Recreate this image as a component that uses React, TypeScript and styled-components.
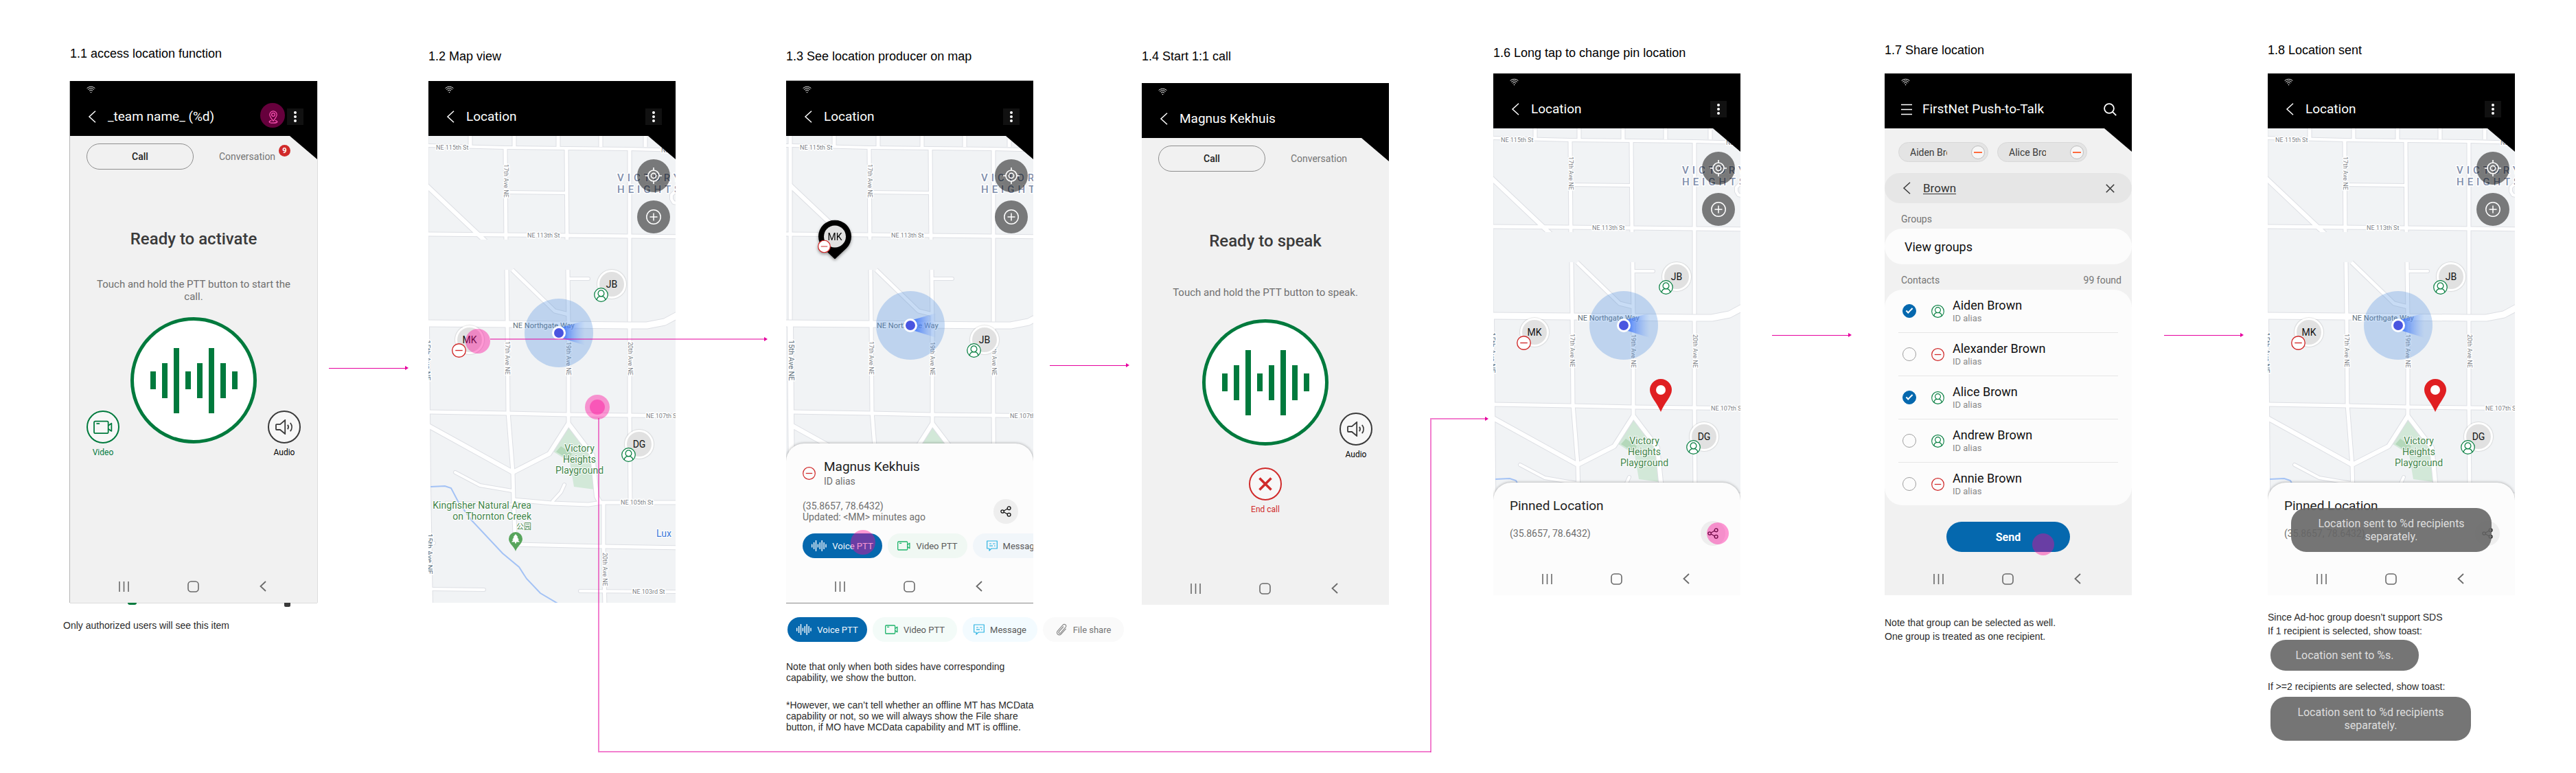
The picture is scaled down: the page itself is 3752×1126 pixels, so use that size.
import React from "react";
import styled, { createGlobalStyle, css } from "styled-components";

/* ---------- tokens ---------- */

const color = {
  green: "#007a3d",
  red: "#d02a2a",
  blue: "#0568ae",
  line: "#e6009e",
  softLine: "rgba(230, 0, 158, 0.5)",
  touch: "rgba(255, 0, 150, 0.4)",
  surface: "#f1f1f1",
  card: "#fcfcfc",
  ink: "#222222",
  muted: "#6f6f6f",
};

const GlobalStyle = createGlobalStyle`
  *, *::before, *::after { box-sizing: border-box; }
  body {
    margin: 0;
    background: #ffffff;
    color: #000000;
    font-family: Roboto, "Liberation Sans", "Noto Sans CJK SC", sans-serif;
  }
  button, input { font: inherit; color: inherit; border: 0; padding: 0; margin: 0; background: none; }
  h2, h3, p, ul { margin: 0; padding: 0; font-weight: 400; }
  ul { list-style: none; }
  svg { display: block; flex: none; }
`;

/* ---------- board ---------- */

const Board = styled.main`
  display: grid;
  grid-template-columns:
    360px minmax(120px, 162fr) 360px minmax(120px, 161fr) 360px minmax(120px, 158fr)
    360px minmax(120px, 152fr) 360px minmax(120px, 210fr) 360px minmax(120px, 198fr) 360px;
  align-items: start;
  padding: 0 89px 30px 102px;
`;

const Screen = styled.section<{ $col: number; $top: number }>`
  grid-row: 1;
  grid-column: ${(p) => p.$col};
  padding-top: ${(p) => p.$top}px;
  min-width: 0;
`;

const Title = styled.h2<{ $gap: number }>`
  font-family: "Liberation Sans", Arial, sans-serif;
  font-size: 18px;
  line-height: 20px;
  margin-bottom: ${(p) => p.$gap}px;
  white-space: nowrap;
`;

const Note = styled.p<{ $top?: number; $line?: number; $out?: boolean }>`
  font-family: "Liberation Sans", Arial, sans-serif;
  font-size: 14px;
  line-height: ${(p) => p.$line ?? 20}px;
  color: #2b2b2b;
  margin-top: ${(p) => p.$top ?? 0}px;
  margin-left: ${(p) => (p.$out ? -10 : 0)}px;
  margin-right: -20px;
`;

/* ---------- connectors ---------- */

const Link = styled.div<{ $cols: string; $y: number; $from: number; $to: number; $soft?: boolean }>`
  grid-row: 1;
  grid-column: ${(p) => p.$cols};
  z-index: 3;
  display: flex;
  align-items: center;
  height: 6px;
  margin: ${(p) => p.$y - 3}px ${(p) => p.$to}px 0 ${(p) => p.$from}px;
  pointer-events: none;
  &::before {
    content: "";
    flex: 1;
    height: ${(p) => (p.$soft ? 2 : 1)}px;
    background: ${(p) => (p.$soft ? color.softLine : color.line)};
  }
  &::after {
    content: "";
    border-left: 5px solid ${color.line};
    border-top: 3px solid transparent;
    border-bottom: 3px solid transparent;
  }
`;

const ElbowRun = styled.div`
  grid-row: 1;
  grid-column: 3 / 9;
  z-index: 3;
  height: 487px;
  margin: 609px 91px 0 247px;
  border: solid ${color.softLine};
  border-width: 0 0 2px 2px;
  pointer-events: none;
`;

const ElbowRise = styled.div`
  grid-row: 1;
  grid-column: 8;
  justify-self: end;
  z-index: 3;
  width: 80px;
  height: 487px;
  margin: 609px 12px 0 0;
  border: solid ${color.softLine};
  border-width: 2px 0 0 2px;
  pointer-events: none;
`;

const ElbowHead = styled.div`
  grid-row: 1;
  grid-column: 8;
  justify-self: end;
  z-index: 3;
  margin: 607px 7px 0 0;
  border-left: 5px solid ${color.line};
  border-top: 3px solid transparent;
  border-bottom: 3px solid transparent;
`;

/* ---------- phone shell ---------- */

const Device = styled.div`
  position: relative;
`;

const Phone = styled.div<{ $frame?: "lined" | "edge" }>`
  position: relative;
  display: flex;
  flex-direction: column;
  min-height: 760px;
  overflow: hidden;
  background: ${color.surface};
  ${(p) =>
    p.$frame === "lined" &&
    css`
      box-shadow: 0 -1px #8a8a8a, 0 1px #8a8a8a;
    `}
  ${(p) =>
    p.$frame === "edge" &&
    css`
      box-shadow: 1px 0 #dddddd, 0 1px #dddddd, -1px 0 #b5b5b5;
    `}
`;

const Header = styled.header`
  position: relative;
  z-index: 2;
  background: #000000;
  color: #ffffff;
`;

const StatusBar = styled.div`
  display: flex;
  align-items: center;
  height: 24px;
  padding-left: 24px;
`;

const TitleBar = styled.div`
  display: flex;
  align-items: center;
  height: 56px;
  padding: 0 20px 0 24px;
`;

const HeaderTitle = styled.h3`
  flex: 1;
  padding-left: 15px;
  font-size: 19px;
  line-height: 24px;
  white-space: nowrap;
`;

const IconButton = styled.button<{ $shade?: boolean; $w?: number }>`
  display: flex;
  align-items: center;
  justify-content: center;
  width: ${(p) => p.$w ?? 24}px;
  height: 24px;
  background: ${(p) => (p.$shade ? "#111111" : "transparent")};
`;

const Notch = styled.svg`
  position: absolute;
  top: 100%;
  right: 0;
`;

const NavBar = styled.nav`
  display: flex;
  height: 48px;
  padding: 0 28px;
  color: #6a6a6a;
`;

const NavButton = styled.button`
  flex: 1;
  display: flex;
  align-items: center;
  justify-content: center;
`;

const Touch = styled.span<{ $x: number; $y: number; $r: number }>`
  position: absolute;
  z-index: 4;
  left: ${(p) => p.$x}px;
  top: ${(p) => p.$y}px;
  width: ${(p) => p.$r * 2}px;
  height: ${(p) => p.$r * 2}px;
  border-radius: 50%;
  background: ${color.touch};
  transform: translate(-50%, -50%);
  pointer-events: none;
`;

/* ---------- icons ---------- */

const WifiIcon = () => (
  <svg width="13" height="11" viewBox="0 0 13 11" fill="none" stroke="#e8e8e8">
    <path d="M.6 3.6a8.6 8.6 0 0 1 11.8 0M2.2 5.5a6.2 6.2 0 0 1 8.6 0M4 7.3a3.7 3.7 0 0 1 5 0" />
    <circle cx="6.5" cy="9.5" r=".8" fill="#e8e8e8" stroke="none" />
  </svg>
);

const ChevronIcon = ({ h = 18, w = 1.5 }: { h?: number; w?: number }) => (
  <svg width="12" height={h} viewBox={`0 0 12 ${h}`} fill="none" stroke="currentColor" strokeWidth={w}>
    <path d={`M11 ${0.8}L2 ${h / 2}l9 ${h / 2 - 0.8}`} />
  </svg>
);

const DotsIcon = () => (
  <svg width="4" height="16" viewBox="0 0 4 16" fill="#ffffff">
    <circle cx="2" cy="2" r="2" />
    <circle cx="2" cy="8" r="2" />
    <circle cx="2" cy="14" r="2" />
  </svg>
);

const PinOutlineIcon = () => (
  <svg width="14" height="19" viewBox="0 0 14 19" fill="none" stroke="#ff8fcb" strokeWidth="1.2">
    <path d="M7 15.2C4.2 11.6 1.8 8.8 1.8 6A5.2 5.2 0 0 1 12.2 6c0 2.8-2.400 5.600-5.200 9.200z" />
    <circle cx="7" cy="6" r="2.4" />
    <path d="M4.400 14.600C2.400 14.900 1.200 15.500 1.200 16.400c0 1 2.600 1.800 5.800 1.800s5.800-.8 5.800-1.800c0-.9-1.200-1.500-3.200-1.800" />
  </svg>
);

const MenuIcon = () => (
  <svg width="16" height="17" viewBox="0 0 16 17" stroke="#ffffff" strokeWidth="1.5">
    <path d="M0 1.5h16M0 8.5h16M0 15.5h16" />
  </svg>
);

const SearchIcon = () => (
  <svg width="19" height="19" viewBox="0 0 19 19" fill="none" stroke="#ffffff" strokeWidth="1.8">
    <circle cx="8" cy="8" r="6.9" />
    <path d="M12.9 12.9l5.3 5.3" />
  </svg>
);

const MinusCircle = ({ size = 19, fill = "none" }: { size?: number; fill?: string }) => (
  <svg width={size} height={size} viewBox="0 0 20 20" fill={fill} stroke={color.red} strokeWidth="1.3">
    <circle cx="10" cy="10" r="9.3" />
    <path d="M5 10h10" />
  </svg>
);

const PersonCircle = ({ size = 19 }: { size?: number }) => (
  <svg width={size} height={size} viewBox="0 0 20 20" fill="#ffffff" stroke="#0a8043" strokeWidth="1.2">
    <circle cx="10" cy="10" r="9.3" />
    <path d="M4 17c.3-3.200 2.500-5 6-5s5.700 1.800 6 5" fill="none" />
    <circle cx="10" cy="8" r="4.2" />
  </svg>
);

const ShareIcon = () => (
  <svg width="16" height="16" viewBox="0 0 16 16" fill="none" stroke="#111111" strokeWidth="1.3">
    <path d="M4.900 7.200l5.600-3.200M4.900 8.800l5.600 3.200" />
    <circle cx="3.1" cy="8" r="2.2" />
    <circle cx="12.6" cy="3.3" r="2.4" />
    <circle cx="12.6" cy="12.7" r="2.4" />
  </svg>
);

const bars = [5, 10, 16, 5, 10, 16, 10, 5];
const VoiceIcon = () => (
  <svg width="22" height="16" viewBox="0 0 22 16" fill="#ffffff">
    {bars.map((h, i) => (
      <rect key={i} x={i * 2.9} y={8 - h / 2} width="1.4" height={h} rx=".5" />
    ))}
  </svg>
);

const VideoIcon = ({ w = 19, stroke = "#1fb36b", line = 1.3 }: { w?: number; stroke?: string; line?: number }) => (
  <svg width={w} height={w * 0.74} viewBox="0 0 19 14" fill="none" stroke={stroke} strokeWidth={line} strokeLinejoin="round">
    <rect x=".7" y="1" width="14" height="12" rx="1.2" />
    <path d="M14.700 5.400l3.200-2.200v7.600l-3.200-2.200M3 3.400h3.200" />
  </svg>
);

const MessageIcon = () => (
  <svg width="16" height="16" viewBox="0 0 16 16" fill="none" stroke="#2db3e2" strokeWidth="1.2">
    <path d="M.7 1h14.600v11H7l-3 3v-3H.7z" strokeLinejoin="round" />
    <path d="M4 5h3M9 5h3.500M4 8.200h5M11 8.200h1.500" />
  </svg>
);

const ClipIcon = () => (
  <svg width="17" height="18" viewBox="0 0 17 18" fill="none" stroke="#8a8a8a" strokeWidth="1.2" strokeLinecap="round">
    <path d="M14.300 8.200l-6.700 7.300c-3.200 3.400-8.200-.7-5.200-4.300l7.700-8.800c2.400-2.600 6.300.5 4 3.300l-7.300 8.200c-1.500 1.600-3.700-.2-2.400-1.900l6.300-7" />
  </svg>
);

const SpeakerIcon = () => (
  <svg width="26" height="22" viewBox="0 0 26 22" fill="none" stroke="#3a3a3a" strokeWidth="1.8">
    <path d="M1 8.200a1 1 0 0 1 1-1h5L14.200 1v20L7 15H2a1 1 0 0 1-1-1z" />
    <path d="M18 7.800c1.300 2 1.300 4.500 0 6.500M21.800 5c3 3.600 3 8.500 0 12.200" />
  </svg>
);

/* ---------- shared parts ---------- */

const CornerNotch = () => (
  <Notch width="40" height="34" viewBox="0 0 40 34" aria-hidden="true">
    <path d="M0 0h40v34z" fill="#000000" />
  </Notch>
);

function PhoneHeader({ title, leading = "back", trailing }: { title: string; leading?: "back" | "menu"; trailing?: React.ReactNode }) {
  return (
    <Header>
      <StatusBar>
        <WifiIcon />
      </StatusBar>
      <TitleBar>
        <IconButton $w={16} aria-label={leading === "back" ? "Back" : "Menu"}>
          {leading === "back" ? <ChevronIcon /> : <MenuIcon />}
        </IconButton>
        <HeaderTitle>{title}</HeaderTitle>
        {trailing}
      </TitleBar>
      <CornerNotch />
    </Header>
  );
}

const MoreButton = () => (
  <IconButton $shade aria-label="More options">
    <DotsIcon />
  </IconButton>
);

const SystemNav = () => (
  <NavBar>
    <NavButton aria-label="Recent apps">
      <svg width="15" height="15" viewBox="0 0 15 15" stroke="currentColor" strokeWidth="1.6">
        <path d="M1 0v15M7.500 0v15M14 0v15" />
      </svg>
    </NavButton>
    <NavButton aria-label="Home">
      <svg width="17" height="17" viewBox="0 0 17 17" fill="none" stroke="currentColor" strokeWidth="1.6">
        <rect x="1" y="1" width="15" height="15" rx="4.5" />
      </svg>
    </NavButton>
    <NavButton aria-label="Back">
      <svg width="10" height="16" viewBox="0 0 10 16" fill="none" stroke="currentColor" strokeWidth="1.8">
        <path d="M9 1L1.500 8L9 15" />
      </svg>
    </NavButton>
  </NavBar>
);

/* ---------- call screen ---------- */

const Tabs = styled.div`
  display: flex;
  padding: 11px 24px 0;
`;

const Tab = styled.button<{ $on?: boolean }>`
  position: relative;
  flex: 1;
  height: 38px;
  border-radius: 19px;
  font-size: 14px;
  font-weight: ${(p) => (p.$on ? 500 : 400)};
  color: ${(p) => (p.$on ? color.ink : "#757575")};
  border: 1px solid ${(p) => (p.$on ? "#8e8e8e" : "transparent")};
`;

const Count = styled.span`
  position: absolute;
  top: 1px;
  right: 14px;
  width: 17px;
  height: 17px;
  border-radius: 50%;
  background: ${color.red};
  color: #ffffff;
  font-size: 11px;
  font-weight: 700;
  line-height: 17px;
  text-align: center;
`;

const Prompt = styled.h3`
  margin-top: 86px;
  font-size: 24px;
  line-height: 30px;
  font-weight: 500;
  color: #3a3a3a;
  text-align: center;
`;

const Hint = styled.p`
  display: flex;
  align-items: center;
  justify-content: center;
  min-height: 36px;
  margin-top: 42px;
  padding: 0 24px;
  font-size: 15px;
  line-height: 18px;
  color: ${color.muted};
  text-align: center;
`;

const Controls = styled.div`
  display: grid;
  grid-template-columns: 48px 1fr 48px;
  height: 206px;
  margin-top: 21px;
  padding: 0 24px;
`;

const TalkButton = styled.button`
  grid-column: 2;
  justify-self: center;
  display: flex;
  align-items: center;
  justify-content: center;
  gap: 9px;
  width: 184px;
  height: 184px;
  border: 5px solid ${color.green};
  border-radius: 50%;
  background: #ffffff;
`;

const TalkBar = styled.span<{ $h: number }>`
  width: 8px;
  height: ${(p) => p.$h}px;
  background: ${color.green};
`;

const RoundAction = styled.button<{ $col?: number; $tone: string; $label?: string }>`
  grid-row: 1;
  grid-column: ${(p) => p.$col ?? "auto"};
  align-self: end;
  display: flex;
  flex-direction: column;
  align-items: center;
  gap: 4px;
  font-size: 12px;
  line-height: 18px;
  color: ${(p) => p.$label ?? p.$tone};
  white-space: nowrap;
  > span:first-child {
    display: flex;
    align-items: center;
    justify-content: center;
    width: 48px;
    height: 48px;
    border: 2px solid ${(p) => p.$tone};
    border-radius: 50%;
    background: #f7f7f7;
  }
`;

const EndRow = styled.div`
  display: flex;
  justify-content: center;
  margin-top: 10px;
`;

const Spacer = styled.div`
  flex: 1;
`;

const StrayDot = styled.i<{ $left: number; $w: number; $h: number; $fill: string; $round?: boolean }>`
  position: absolute;
  top: 100%;
  left: ${(p) => p.$left}px;
  width: ${(p) => p.$w}px;
  height: ${(p) => p.$h}px;
  background: ${(p) => p.$fill};
  border-radius: ${(p) => (p.$round ? "0 0 8px 8px" : "0 0 2px 2px")};
`;

const talkBars = [26, 51, 95, 26, 51, 95, 51, 26];

function CallBody({ prompt, hint, unread, video, ending }: { prompt: string; hint: string; unread?: number; video?: boolean; ending?: boolean }) {
  return (
    <>
      <Tabs>
        <Tab $on>Call</Tab>
        <Tab>
          Conversation
          {unread ? <Count>{unread}</Count> : null}
        </Tab>
      </Tabs>
      <Prompt>{prompt}</Prompt>
      <Hint>{hint}</Hint>
      <Controls>
        {video && (
          <RoundAction $col={1} $tone={color.green}>
            <span>
              <VideoIcon w={28} stroke={color.green} line={1.2} />
            </span>
            Video
          </RoundAction>
        )}
        <TalkButton aria-label="Push to talk">
          {talkBars.map((h, i) => (
            <TalkBar key={i} $h={h} />
          ))}
        </TalkButton>
        <RoundAction $col={3} $tone="#3a3a3a" $label="#000000">
          <span>
            <SpeakerIcon />
          </span>
          Audio
        </RoundAction>
      </Controls>
      {ending && (
        <EndRow>
          <RoundAction $tone={color.red}>
            <span>
              <svg width="20" height="20" viewBox="0 0 20 20" stroke={color.red} strokeWidth="3.6">
                <path d="M1.500 1.500l17 17M18.500 1.500l-17 17" />
              </svg>
            </span>
            End call
          </RoundAction>
        </EndRow>
      )}
      <Spacer />
      <SystemNav />
    </>
  );
}

/* ---------- map ---------- */

const MapArt = styled.svg`
  position: absolute;
  inset: 0;
  width: 100%;
  height: 100%;
  background: #f1f3f5;
`;

const Street = styled.text`
  font-family: Roboto, sans-serif;
  font-size: 9px;
  fill: #7d8287;
  stroke: #ffffff;
  stroke-width: 3px;
  stroke-linejoin: round;
  paint-order: stroke;
`;

const MainStreet = styled(Street)`
  font-size: 11px;
  fill: #5f717d;
`;

const District = styled(Street)`
  font-size: 15px;
  font-weight: 500;
  letter-spacing: 5px;
  fill: #7f8eab;
`;

const Place = styled(Street)`
  font-family: Roboto, "Noto Sans CJK SC", sans-serif;
  font-size: 14px;
  stroke-width: 2px;
  fill: #3f8549;
`;

const PlaceSub = styled(Place)`
  font-size: 11px;
`;

const Shop = styled(Place)`
  fill: #3b78d8;
`;

type Pt = [number, number];
type Road = { w: number; p: Pt[]; round?: boolean };

const upperRoads: Road[] = [
  { w: 4, p: [[-12, 94], [0, 94], [112, 97], [202, 98], [293, 99], [372, 101]] },
  ...[61, 125, 189, 251, 316].map((x): Road => ({ w: 5, p: [[x, 70], [x, 96]] })),
  { w: 5, p: [[-3, 70], [-3, 352]] },
  { w: 5, p: [[112, 97], [113, 240]] },
  { w: 5, p: [[201, 98], [202, 240]] },
  { w: 5, p: [[293, 99], [293, 355]] },
  { w: 4, p: [[113, 162], [201, 163]] },
  { w: 6, p: [[-3, 152], [71, 222], [90, 240]] },
  { w: 5, p: [[-12, 223], [109, 224], [200, 225], [293, 226], [372, 227]] },
  { w: 4, round: true, p: [[372, 180], [357, 177], [354, 172], [354, 166], [358, 162], [372, 160]] },
];

const lowerRoads: Road[] = [
  { w: 5, p: [[114, 275], [115, 355], [116, 482], [123, 570], [124, 612], [126, 660]] },
  { w: 5, p: [[203, 275], [204, 355], [204, 499]] },
  { w: 5, p: [[122, 275], [184, 335], [204, 340]] },
  { w: 4, round: true, p: [[204, 288], [233, 288]] },
  { w: 8, p: [[-3, 352], [-2, 482], [-1, 590], [2, 765]] },
  { w: 9, p: [[-12, 353], [114, 354], [190, 355], [293, 356], [318, 356], [344, 351], [372, 336]] },
  { w: 5, p: [[293, 352], [293, 482], [294, 612]] },
  { w: 5, p: [[-2, 482], [116, 484], [204, 486], [293, 487], [372, 488]] },
  { w: 6, p: [[-2, 501], [123, 570], [176, 543], [204, 499], [239, 545], [245, 605], [250, 614]] },
  { w: 4, round: true, p: [[39, 570], [75, 589], [122, 597]] },
  { w: 3, round: true, p: [[26, 614], [124, 617]] },
  { w: 5, p: [[124, 610], [180, 615], [233, 617], [253, 614], [372, 614]] },
  { w: 4, round: true, p: [[198, 588], [193, 599], [181, 612]] },
  { w: 5, p: [[255, 614], [255, 677], [257, 765]] },
  { w: 5, p: [[127, 675], [255, 678], [372, 680]] },
  { w: 4, round: true, p: [[221, 743], [372, 744]] },
  { w: 4, round: true, p: [[2, 740], [81, 741]] },
  { w: 4, round: true, p: [[2, 673], [8, 673]] },
];

const river: Pt[] = [[3, 591], [24, 590], [33, 593], [44, 614], [63, 640], [108, 688], [132, 708], [143, 725], [163, 746], [190, 762]];
const park: Pt[] = [[204, 502], [237, 545], [242, 595], [212, 591], [206, 555], [179, 538]];
const parkDark: Pt[] = [[193, 532], [209, 543], [204, 551], [186, 540]];

type Label = { t: string; x: number; y: number; kind?: typeof Street; turn?: boolean; anchor?: "middle" | "end" };

const labels: Label[] = [
  { t: "NE 115th St", x: 11, y: 97 },
  { t: "NE 115th St", x: 339, y: 101 },
  { t: "NE 113th St", x: 144, y: 225 },
  { t: "NE 107th St", x: 317, y: 488 },
  { t: "NE 105th St", x: 280, y: 614 },
  { t: "NE 103rd St", x: 297, y: 744 },
  { t: "17th Ave NE", x: 113, y: 121, turn: true },
  { t: "17th Ave NE", x: 115, y: 379, turn: true },
  { t: "19th Ave NE", x: 204, y: 380, turn: true },
  { t: "20th Ave NE", x: 294, y: 380, turn: true },
  { t: "20th Ave NE", x: 257, y: 687, turn: true },
  { t: "15th Ave NE", x: -2, y: 377, turn: true, kind: MainStreet },
  { t: "15th Ave NE", x: 1, y: 659, turn: true, kind: MainStreet },
  { t: "NE Northgate Way", x: 123, y: 356, kind: MainStreet },
  { t: "VICTORY", x: 275, y: 141, kind: District },
  { t: "HEIGHTS", x: 275, y: 158, kind: District },
  { t: "Victory", x: 220, y: 535, kind: Place, anchor: "middle" },
  { t: "Heights", x: 220, y: 551, kind: Place, anchor: "middle" },
  { t: "Playground", x: 220, y: 567, kind: Place, anchor: "middle" },
  { t: "Kingfisher Natural Area", x: 150, y: 618, kind: Place, anchor: "end" },
  { t: "on Thornton Creek", x: 150, y: 634, kind: Place, anchor: "end" },
  { t: "公园", x: 150, y: 649, kind: PlaceSub, anchor: "end" },
  { t: "Lux", x: 332, y: 659, kind: Shop },
];

/* `shift` pans the map sideways; `depth` is the height left visible above a sheet. */
function CityMap({ shift = 0, depth = 760 }: { shift?: number; depth?: number }) {
  const pts = (p: Pt[]) => p.map(([x, y]) => `${x + shift},${y}`).join(" ");
  const roads = (list: Road[]) => (
    <g fill="none" strokeLinejoin="round">
      {list.map((r, i) => (
        <polyline key={i} points={pts(r.p)} stroke="#dddfe4" strokeWidth={r.w + 2} strokeLinecap={r.round ? "round" : "butt"} />
      ))}
      {list.map((r, i) => (
        <polyline key={`f${i}`} points={pts(r.p)} stroke="#ffffff" strokeWidth={r.w} strokeLinecap={r.round ? "round" : "butt"} />
      ))}
    </g>
  );
  return (
    <MapArt aria-label="Street map">
      {roads(upperRoads)}
      <rect x={shift + 1} y="231" width="288" height="44" fill="#f1f3f5" />
      <polygon points={pts(park)} fill="#d2e8d8" />
      <polygon points={pts(parkDark)} fill="#b4d8ba" />
      {roads(lowerRoads)}
      <polyline points={pts(river)} fill="none" stroke="#a3c2f5" strokeWidth="2" />
      {labels
        .filter((l) => l.y < depth)
        .map((l) => {
          const Kind = l.kind ?? Street;
          return (
            <Kind
              key={`${l.t}-${l.x}-${l.y}`}
              transform={`translate(${l.x + shift} ${l.y})${l.turn ? " rotate(90)" : ""}`}
              textAnchor={l.anchor ?? "start"}
              dominantBaseline="central"
            >
              {l.t}
            </Kind>
          );
        })}
      <g transform={`translate(${127 + shift} 667)`}>
        <path d="M0 18C-2 11-10 7-10 0A10 10 0 0 1 10 0C10 7 2 11 0 18z" fill="#58a55c" />
        <path d="M0-7l3.600 4.600H2.200L5 1.200H3.200L6 4.600H1V6.500H-1V4.600H-6L-3.200 1.200H-5L-2.200-2.400H-3.600z" fill="#ffffff" />
      </g>
    </MapArt>
  );
}

const MapLayer = styled.div`
  position: relative;
  z-index: 1;
  display: flex;
  flex-direction: column;
  align-items: flex-end;
  gap: 12px;
  padding: 34px 8px 0 0;
`;

const MapButton = styled.button`
  display: flex;
  align-items: center;
  justify-content: center;
  width: 48px;
  height: 48px;
  border-radius: 50%;
  background: rgba(0, 0, 0, 0.5);
`;

const MapTools = () => (
  <MapLayer>
    <MapButton aria-label="Centre on me">
      <svg width="24" height="24" viewBox="0 0 24 24" fill="none" stroke="#ffffff" strokeWidth="1.6">
        <circle cx="12" cy="12" r="8" />
        <circle cx="12" cy="12" r="3.6" />
        <path d="M12 0v4M12 20v4M0 12h4M20 12h4" />
      </svg>
    </MapButton>
    <MapButton aria-label="Add">
      <svg width="22" height="22" viewBox="0 0 22 22" fill="none" stroke="#ffffff" strokeWidth="1.5">
        <circle cx="11" cy="11" r="10.2" />
        <path d="M11 5.500v11M5.500 11h11" />
      </svg>
    </MapButton>
  </MapLayer>
);

const Spot = styled.div<{ $x: number; $y: number }>`
  position: absolute;
  left: ${(p) => p.$x}px;
  top: ${(p) => p.$y}px;
  transform: translate(-50%, -50%);
`;

const Face = styled.span`
  display: flex;
  align-items: center;
  justify-content: center;
  width: 42px;
  height: 42px;
  border: 3px solid #ffffff;
  border-radius: 50%;
  background: #e1e1e1;
  box-shadow: 0 0 1px 1px rgba(0, 0, 0, 0.1);
  font-size: 14px;
  color: #111111;
`;

const Presence = styled.span`
  position: absolute;
  left: -5px;
  bottom: -5px;
`;

function Person({ name, x, y, online }: { name: string; x: number; y: number; online?: boolean }) {
  return (
    <Spot $x={x} $y={y}>
      <Face>{name}</Face>
      <Presence>{online ? <PersonCircle size={21} /> : <MinusCircle size={21} fill="#ffffff" />}</Presence>
    </Spot>
  );
}

const PinShape = styled.div`
  position: relative;
  width: 48px;
  height: 57px;
  filter: drop-shadow(0 2px 2px rgba(0, 0, 0, 0.4));
`;

const PinFace = styled.span`
  position: absolute;
  top: 8px;
  left: 8px;
  width: 32px;
  height: 32px;
  border-radius: 50%;
  background: #e1e1e1;
  font-size: 14px;
  line-height: 32px;
  text-align: center;
`;

const PinPresence = styled.span`
  position: absolute;
  left: -1px;
  top: 29px;
`;

const SelectedPerson = ({ name, x, y }: { name: string; x: number; y: number }) => (
  <Spot $x={x} $y={y}>
    <PinShape>
      <svg width="48" height="57" viewBox="0 0 48 57">
        <path d="M24 57L7 41A24 24 0 1 1 41 41z" fill="#000000" />
      </svg>
      <PinFace>{name}</PinFace>
      <PinPresence>
        <MinusCircle size={19} fill="#ffffff" />
      </PinPresence>
    </PinShape>
  </Spot>
);

function MyPosition({ x, y, id }: { x: number; y: number; id: string }) {
  return (
    <Spot $x={x} $y={y}>
      <svg width="100" height="100" viewBox="0 0 100 100">
        <defs>
          <linearGradient id={id}>
            <stop offset="0" stopColor="#3d74fb" />
            <stop offset="1" stopColor="#7aa5f5" stopOpacity="0" />
          </linearGradient>
        </defs>
        <circle cx="50" cy="50" r="50" fill="rgba(74,140,222,.3)" />
        <path d="M53 42L88 32V68L53 57z" fill={`url(#${id})`} />
        <circle cx="50" cy="50" r="8.5" fill="#4a55e0" stroke="#ffffff" strokeWidth="3" />
      </svg>
    </Spot>
  );
}

const DroppedPin = ({ x, y }: { x: number; y: number }) => (
  <Spot $x={x} $y={y}>
    <svg width="32" height="48" viewBox="0 0 32 48">
      <path d="M16 0A16 16 0 0 1 32 16C32 25 22 34 16 48C10 34 0 25 0 16A16 16 0 0 1 16 0z" fill="#e01f22" />
      <circle cx="16" cy="16" r="7" fill="#ffffff" />
    </svg>
  </Spot>
);

/* ---------- bottom sheet ---------- */

const Sheet = styled.div`
  position: relative;
  z-index: 1;
  margin-top: auto;
  border-radius: 26px 26px 0 0;
  background: ${color.card};
  box-shadow: 0 0 4px rgba(0, 0, 0, 0.35);
`;

const SheetBody = styled.div<{ $bottom: number }>`
  padding: 22px 22px ${(p) => p.$bottom}px 24px;
`;

const SheetHead = styled.div`
  display: flex;
  align-items: center;
  gap: 12px;
`;

const SheetTitle = styled.h3`
  font-size: 19px;
  line-height: 24px;
  color: ${color.ink};
`;

const Sub = styled.p`
  font-size: 14px;
  line-height: 18px;
  color: ${color.muted};
`;

const ShareRow = styled.div<{ $gap: number }>`
  display: flex;
  align-items: center;
  justify-content: space-between;
  margin-top: ${(p) => p.$gap}px;
  font-size: 14px;
  line-height: 16px;
  color: ${color.muted};
`;

const ShareButton = styled.button`
  display: flex;
  align-items: center;
  justify-content: center;
  width: 36px;
  height: 36px;
  border-radius: 50%;
  background: #eeeeee;
`;

const PillRow = styled.div<{ $top: number; $indent?: number }>`
  display: flex;
  gap: 8px;
  margin: ${(p) => p.$top}px 0 0 ${(p) => p.$indent ?? 0}px;
`;

const Pill = styled.button<{ $w: number; $bg: string; $fg?: string }>`
  flex: none;
  display: flex;
  align-items: center;
  justify-content: center;
  gap: 8px;
  width: ${(p) => p.$w}px;
  height: 36px;
  border-radius: 18px;
  font-size: 13px;
  white-space: nowrap;
  background: ${(p) => p.$bg};
  color: ${(p) => p.$fg ?? "#5a5a5a"};
`;

function ActionPills({ all }: { all?: boolean }) {
  return (
    <>
      <Pill $w={116} $bg={color.blue} $fg="#f4f8fb">
        <VoiceIcon />
        Voice PTT
      </Pill>
      <Pill $w={all ? 123 : 116} $bg={all ? "#f3fbf8" : "#f0f8f3"}>
        <VideoIcon />
        Video PTT
      </Pill>
      <Pill $w={all ? 109 : 116} $bg={all ? "#f3fbff" : "#f1f6fa"}>
        <MessageIcon />
        Message
      </Pill>
      {all && (
        <Pill $w={118} $bg="#fafafa" $fg="#757575">
          <ClipIcon />
          File share
        </Pill>
      )}
    </>
  );
}

const Toast = styled.div<{ $w: number; $top?: number; $indent?: number; $over?: boolean }>`
  width: ${(p) => p.$w}px;
  padding: 13px 32px;
  border-radius: 22px;
  background: ${(p) => (p.$over ? "rgba(102, 102, 102, 0.9)" : "#757575")};
  color: #dedede;
  font-size: 16px;
  line-height: 19px;
  text-align: center;
  margin: ${(p) => p.$top ?? 0}px 0 0 ${(p) => p.$indent ?? 0}px;
  ${(p) =>
    p.$over &&
    css`
      position: absolute;
      z-index: 3;
      left: 34px;
      bottom: 63px;
    `}
`;

function PinnedMap({ id, children }: { id: string; children?: React.ReactNode }) {
  return (
    <Phone>
      <CityMap depth={600} />
      <PhoneHeader title="Location" trailing={<MoreButton />} />
      <MapTools />
      <MyPosition x={190} y={367} id={id} />
      <Person name="JB" x={267} y={296} online />
      <Person name="MK" x={60} y={377} />
      <Person name="DG" x={307} y={529} online />
      <DroppedPin x={244} y={469} />
      <Sheet>
        <SheetBody $bottom={24}>
          <SheetTitle>Pinned Location</SheetTitle>
          <ShareRow $gap={10}>
            <span>(35.8657, 78.6432)</span>
            <ShareButton aria-label="Share">
              <ShareIcon />
            </ShareButton>
          </ShareRow>
        </SheetBody>
        <SystemNav />
      </Sheet>
      {children}
    </Phone>
  );
}

/* ---------- contact picker ---------- */

const Chips = styled.div`
  display: flex;
  gap: 13px;
  padding: 20px 20px 16px;
`;

const Chip = styled.button`
  display: flex;
  align-items: center;
  justify-content: space-between;
  width: 131px;
  height: 29px;
  padding: 0 4px 0 16px;
  border: 1px solid #d8d8d8;
  border-radius: 15px;
  background: #e4e4e4;
  font-size: 14px;
  color: #3a3a3a;
  > span {
    width: 54px;
    overflow: hidden;
    white-space: nowrap;
    text-align: left;
  }
`;

const SearchField = styled.div`
  display: flex;
  align-items: center;
  height: 44px;
  padding: 0 20px 0 24px;
  border-radius: 22px;
  background: #e6e6e6;
  color: #3a3a3a;
`;

const SearchInput = styled.input`
  flex: 1;
  min-width: 0;
  margin-left: 16px;
  font-size: 17px;
  color: #333333;
  text-decoration: underline;
  text-underline-offset: 2px;
  outline: none;
`;

const GroupLabel = styled.div`
  display: flex;
  justify-content: space-between;
  padding: 14px 15px 5px 24px;
  font-size: 14px;
  line-height: 18px;
  color: #757575;
`;

const GroupsButton = styled.button`
  height: 52px;
  padding-left: 29px;
  border-radius: 26px;
  background: ${color.card};
  font-size: 18px;
  color: #111111;
  text-align: left;
`;

const ContactList = styled.ul`
  border-radius: 26px;
  background: ${color.card};
  padding: 0 20px;
`;

const ContactRow = styled.li`
  border-bottom: 1px solid #e6e6e6;
  &:last-child {
    border-bottom: 0;
  }
`;

const ContactLabel = styled.label`
  display: flex;
  align-items: center;
  height: 62px;
  padding-left: 6px;
`;

const Check = styled.input`
  appearance: none;
  flex: none;
  display: flex;
  align-items: center;
  justify-content: center;
  width: 20px;
  height: 20px;
  margin-right: 22px;
  border: 1px solid #a0a0a0;
  border-radius: 50%;
  &:checked {
    border-color: ${color.blue};
    background: ${color.blue};
  }
  &:checked::after {
    content: "";
    width: 10px;
    height: 5px;
    margin-top: -3px;
    border: solid #ffffff;
    border-width: 0 0 2px 2px;
    transform: rotate(-45deg);
  }
`;

const ContactText = styled.span`
  display: flex;
  flex-direction: column;
  padding-left: 12px;
  font-size: 13px;
  line-height: 16px;
  color: #8a8a8a;
  > strong {
    font-size: 18px;
    line-height: 22px;
    font-weight: 400;
    color: #111111;
  }
`;

const SendButton = styled.button`
  align-self: center;
  width: 180px;
  height: 44px;
  margin-top: 24px;
  border-radius: 22px;
  background: ${color.blue};
  color: #ffffff;
  font-size: 16px;
  font-weight: 700;
`;

const contacts = [
  { name: "Aiden Brown", picked: true, online: true },
  { name: "Alexander Brown", picked: false, online: false },
  { name: "Alice Brown", picked: true, online: true },
  { name: "Andrew Brown", picked: false, online: true },
  { name: "Annie Brown", picked: false, online: false },
];

const RemoveIcon = () => (
  <svg width="20" height="20" viewBox="0 0 20 20" fill="#f6f6f6" stroke="#bdbdbd">
    <circle cx="10" cy="10" r="9.5" />
    <path d="M4 10h12" stroke="#ff6a3c" strokeWidth="2" />
  </svg>
);

function ContactPicker() {
  return (
    <Phone>
      <PhoneHeader
        title="FirstNet Push-to-Talk"
        leading="menu"
        trailing={
          <IconButton aria-label="Search">
            <SearchIcon />
          </IconButton>
        }
      />
      <Chips>
        {["Aiden Brown", "Alice Brown"].map((n) => (
          <Chip key={n} aria-label={`Remove ${n}`}>
            <span>{n}</span>
            <RemoveIcon />
          </Chip>
        ))}
      </Chips>
      <SearchField>
        <IconButton $w={16} aria-label="Back">
          <ChevronIcon />
        </IconButton>
        <SearchInput aria-label="Search contacts" defaultValue="Brown" />
        <IconButton aria-label="Clear">
          <svg width="13" height="13" viewBox="0 0 13 13" stroke="currentColor" strokeWidth="1.6">
            <path d="M.8.8l11.400 11.400M12.200.8L.8 12.200" />
          </svg>
        </IconButton>
      </SearchField>
      <GroupLabel>Groups</GroupLabel>
      <GroupsButton>View groups</GroupsButton>
      <GroupLabel>
        <span>Contacts</span>
        <span>99 found</span>
      </GroupLabel>
      <ContactList>
        {contacts.map((c) => (
          <ContactRow key={c.name}>
            <ContactLabel>
              <Check type="checkbox" defaultChecked={c.picked} />
              {c.online ? <PersonCircle /> : <MinusCircle />}
              <ContactText>
                <strong>{c.name}</strong>
                ID alias
              </ContactText>
            </ContactLabel>
          </ContactRow>
        ))}
      </ContactList>
      <SendButton>Send</SendButton>
      <Spacer />
      <SystemNav />
      <Touch $x={231} $y={686} $r={16} />
    </Phone>
  );
}

/* ---------- page ---------- */

export default function App() {
  return (
    <>
      <GlobalStyle />
      <Board>
        <Screen $col={1} $top={68}>
          <Title $gap={30}>1.1 access location function</Title>
          <Device>
            <Phone $frame="edge">
              <PhoneHeader
                title="_team name_ (%d)"
                trailing={
                  <>
                    <IconButton $w={40} aria-label="Location">
                      <PinOutlineIcon />
                    </IconButton>
                    <MoreButton />
                  </>
                }
              />
              <CallBody prompt="Ready to activate" hint="Touch and hold the PTT button to start the call." unread={9} video />
              <Touch $x={295} $y={50} $r={18} />
            </Phone>
            <StrayDot $left={84} $w={13} $h={3} $fill={color.green} $round />
            <StrayDot $left={312} $w={9} $h={6} $fill="#3a3a3a" />
          </Device>
          <Note $top={25} $line={16} $out>
            Only authorized users will see this item
          </Note>
        </Screen>

        <Screen $col={3} $top={72}>
          <Title $gap={26}>1.2 Map view</Title>
          <Phone>
            <CityMap />
            <PhoneHeader title="Location" trailing={<MoreButton />} />
            <MapTools />
            <MyPosition x={190} y={367} id="beam-map" />
            <Person name="JB" x={267} y={296} online />
            <Person name="MK" x={60} y={377} />
            <Person name="DG" x={307} y={529} online />
            <Touch $x={72} $y={379} $r={18} />
            <Touch $x={246} $y={475} $r={18} />
            <Touch $x={246} $y={475} $r={11} />
          </Phone>
        </Screen>

        <Screen $col={5} $top={72}>
          <Title $gap={26}>1.3 See location producer on map</Title>
          <Phone $frame="lined">
            <CityMap shift={9} depth={520} />
            <PhoneHeader title="Location" trailing={<MoreButton />} />
            <MapTools />
            <MyPosition x={181} y={356} id="beam-detail" />
            <SelectedPerson name="MK" x={71} y={231} />
            <Person name="JB" x={289} y={377} online />
            <Sheet>
              <SheetBody $bottom={17}>
                <SheetHead>
                  <MinusCircle />
                  <div>
                    <SheetTitle>Magnus Kekhuis</SheetTitle>
                    <Sub>ID alias</Sub>
                  </div>
                </SheetHead>
                <ShareRow $gap={17}>
                  <span>
                    (35.8657, 78.6432)
                    <br />
                    Updated: &lt;MM&gt; minutes ago
                  </span>
                  <ShareButton aria-label="Share">
                    <ShareIcon />
                  </ShareButton>
                </ShareRow>
                <PillRow $top={14}>
                  <ActionPills />
                </PillRow>
              </SheetBody>
              <SystemNav />
            </Sheet>
            <Touch $x={112} $y={672} $r={18} />
          </Phone>
          <PillRow $top={21} $indent={2}>
            <ActionPills all />
          </PillRow>
          <Note $top={28} $line={16}>
            Note that only when both sides have corresponding
            <br />
            capability, we show the button.
          </Note>
          <Note $top={24} $line={16}>
            *However, we can’t tell whether an offline MT has MCData
            <br />
            capability or not, so we will always show the File share
            <br />
            button, if MO have MCData capability and MT is offline.
          </Note>
        </Screen>

        <Screen $col={7} $top={72}>
          <Title $gap={29}>1.4 Start 1:1 call</Title>
          <Phone>
            <PhoneHeader title="Magnus Kekhuis" />
            <CallBody prompt="Ready to speak" hint="Touch and hold the PTT button to speak." ending />
          </Phone>
        </Screen>

        <Screen $col={9} $top={67}>
          <Title $gap={20}>1.6 Long tap to change pin location</Title>
          <PinnedMap id="beam-pin">
            <Touch $x={327} $y={670} $r={16} />
          </PinnedMap>
        </Screen>

        <Screen $col={11} $top={63}>
          <Title $gap={24}>1.7 Share location</Title>
          <ContactPicker />
          <Note $top={30}>
            Note that group can be selected as well.
            <br />
            One group is treated as one recipient.
          </Note>
        </Screen>

        <Screen $col={13} $top={63}>
          <Title $gap={24}>1.8 Location sent</Title>
          <PinnedMap id="beam-sent">
            <Toast $w={292} $over role="status">
              Location sent to %d recipients separately.
            </Toast>
          </PinnedMap>
          <Note $top={22}>
            Since Ad-hoc group doesn’t support SDS
            <br />
            If 1 recipient is selected, show toast:
          </Note>
          <Toast $w={216} $top={3} $indent={4}>
            Location sent to %s.
          </Toast>
          <Note $top={13}>If &gt;=2 recipients are selected, show toast:</Note>
          <Toast $w={292} $top={5} $indent={4}>
            Location sent to %d recipients separately.
          </Toast>
        </Screen>

        <Link $cols="2" $y={536} $from={17} $to={29} />
        <Link $cols="3 / 5" $y={494} $from={90} $to={27} $soft />
        <Link $cols="6" $y={532} $from={24} $to={18} />
        <Link $cols="10" $y={488} $from={46} $to={48} />
        <Link $cols="12" $y={488} $from={47} $to={35} />
        <ElbowRun />
        <ElbowRise />
        <ElbowHead />
      </Board>
    </>
  );
}
